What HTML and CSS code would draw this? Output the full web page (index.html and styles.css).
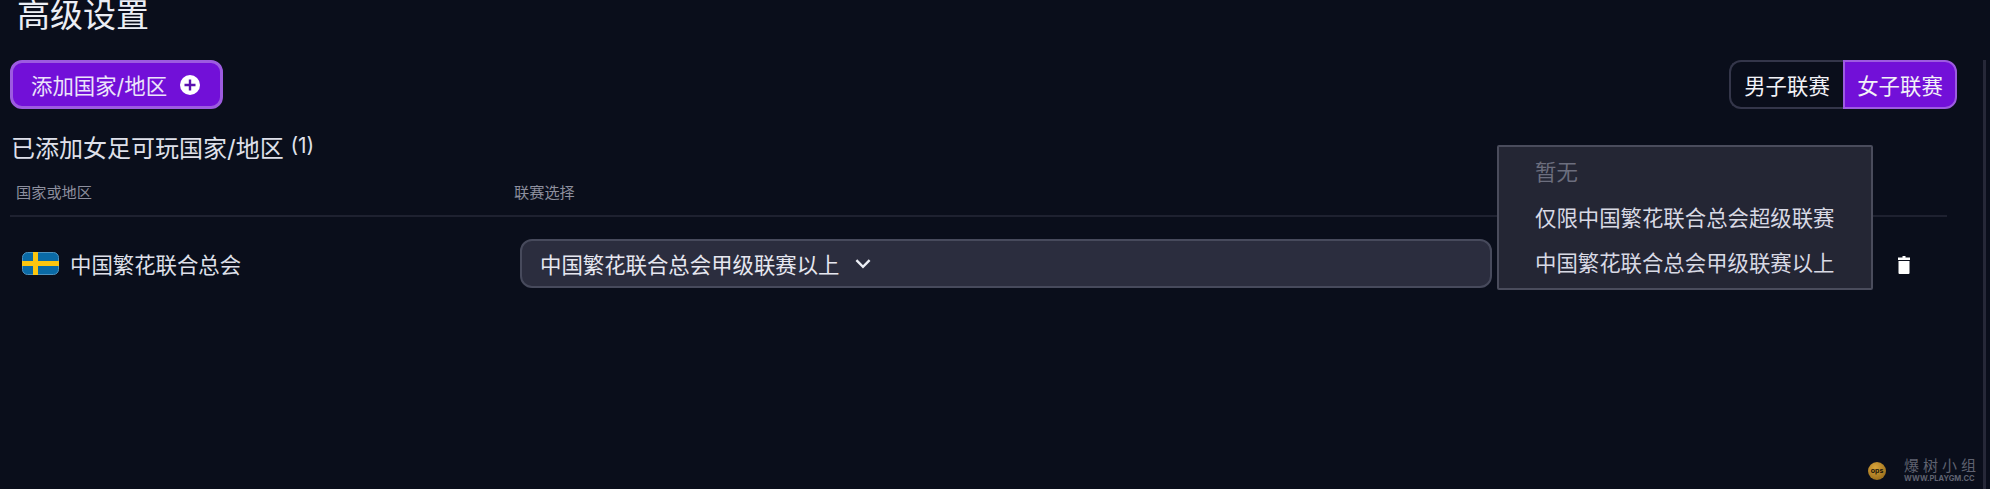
FILE: index.html
```html
<!DOCTYPE html>
<html lang="zh-CN">
<head>
    <meta charset="UTF-8">
    <title>高级设置</title>
    <link rel="stylesheet" href="styles.css">
</head>
<body>
    <div class="page">
        <h1 class="page-title">高级设置</h1>
        <div class="toolbar">
            <button type="button" class="btn-add">
                添加国家/地区
                <svg class="plus-icon" viewBox="0 0 20 20" width="20" height="20">
                    <circle cx="10" cy="10" r="10" fill="#fff"/>
                    <path d="M10 4.5v11M4.5 10h11" stroke="#5a0fb0" stroke-width="2.4"/>
                </svg>
            </button>
            <div class="toggle">
                <div class="toggle-item">男子联赛</div>
                <div class="toggle-item active">女子联赛</div>
            </div>
        </div>
        <h2 class="section-title">已添加女足可玩国家/地区 <sup class="count">(1)</sup></h2>
        <div class="table">
            <div class="table-head">
                <div class="head-cell">国家或地区</div>
                <div class="head-cell">联赛选择</div>
            </div>
            <div class="table-row">
                <div class="country">
                    <svg class="flag" viewBox="0 0 37 23" width="37" height="23">
                        <rect x="0.5" y="0.5" width="36" height="22" rx="5" fill="#0a6aa6" stroke="#4f93bf"/>
                        <path d="M11 0h5v23h-5zM0 9h37v5H0z" fill="#fcc60f"/>
                    </svg>
                    <span>中国繁花联合总会</span>
                </div>
                <div class="select">
                    <span>中国繁花联合总会甲级联赛以上</span>
                    <svg class="chevron" viewBox="0 0 16 10" width="18" height="11">
                        <path d="M2 2l6 6 6-6" fill="none" stroke="#eceef5" stroke-width="2.2"/>
                    </svg>
                </div>
                <div class="row-action">
                    <svg class="trash" viewBox="0 0 12 18" width="12" height="18">
                        <path d="M4.5 0h3v1.500h4.500v2.500H0V1.500h4.500zM0.500 5h11v12a1 1 0 0 1-1 1h-9a1 1 0 0 1-1-1z" fill="#fff"/>
                    </svg>
                </div>
            </div>
        </div>
    </div>

    <ul class="dropdown">
        <li class="disabled">暂无</li>
        <li>仅限中国繁花联合总会超级联赛</li>
        <li>中国繁花联合总会甲级联赛以上</li>
    </ul>

    <div class="scrollbar"></div>

    <div class="watermark">
        <div class="ball">ops</div>
        <div class="mark-text">
            <div class="mark-name">爆树小组</div>
            <div class="mark-url">WWW.PLAYGM.CC</div>
        </div>
    </div>
</body>
</html>
```

FILE: styles.css
```css
html, body {
    margin: 0;
    height: 100%;
}
body {
    background-color: #0a0e1b;
    color: #e6e7f0;
    font-family: Inter, "Noto Sans CJK SC", sans-serif;
    font-size: 21.4px;
    position: relative;
    overflow: hidden;
}
.page {
    width: 1947px;
    padding-left: 10px;
    box-sizing: border-box;
}
.page-title {
    margin: 0 0 30px 7px;
    height: 30px;
    line-height: 30px;
    font-size: 33px;
    font-weight: 400;
    color: #eceef5;
}
.toolbar {
    display: flex;
    justify-content: space-between;
    width: 1947px;
    height: 49px;
}
.btn-add {
    display: flex;
    align-items: center;
    gap: 13px;
    height: 49px;
    width: 213px;
    padding: 0 0 0 18px;
    background-color: #7210d8;
    border: 3px solid #9d5be0;
    border-radius: 12px;
    color: #ece4fa;
    font: inherit;
    box-sizing: border-box;
}
.toggle {
    display: flex;
    height: 49px;
}
.toggle-item {
    width: 114px;
    display: flex;
    align-items: center;
    justify-content: center;
    box-sizing: border-box;
    border: 2px solid #34364a;
    border-right: none;
    border-radius: 12px 0 0 12px;
    color: #f2f2f7;
}
.toggle-item.active {
    background-color: #7210d8;
    border: 2px solid #9d5be0;
    border-radius: 0 12px 12px 0;
}
.section-title {
    margin: 25px 0 0 1px;
    height: 30px;
    line-height: 30px;
    font-size: 24px;
    font-weight: 400;
    color: #dfe0ea;
}
.count {
    font-size: 21px;
    line-height: 0;
    vertical-align: 4px;
}
.table {
    margin-top: 12px;
}
.table-head {
    display: grid;
    grid-template-columns: 498px 1fr;
    height: 39px;
    border-bottom: 2px solid #1e2130;
    line-height: 33px;
}
.head-cell {
    padding-left: 6px;
    font-size: 15.2px;
    color: #8d8f9e;
}
.table-row {
    display: grid;
    grid-template-columns: 510px 972px 1fr;
    align-items: center;
    margin-top: 22px;
    height: 49px;
}
.country {
    display: flex;
    align-items: center;
    gap: 11px;
    padding-left: 12px;
    color: #dfe0ea;
}
.select {
    display: flex;
    align-items: center;
    gap: 15px;
    height: 49px;
    padding-left: 18px;
    background-color: #2b2d3e;
    border: 2px solid #474a5c;
    border-radius: 12px;
    box-sizing: border-box;
}
.row-action {
    display: flex;
    justify-content: flex-end;
    padding: 3px 37px 0 0;
}
.dropdown {
    position: absolute;
    left: 1497px;
    top: 145px;
    width: 376px;
    height: 145px;
    margin: 0;
    padding: 3px 0 0 36px;
    list-style: none;
    box-sizing: border-box;
    background-color: #242634;
    border: 2px solid #4a4c5c;
    border-radius: 2px;
    color: #d8d9e4;
}
.dropdown li {
    height: 45.500px;
    line-height: 45.500px;
}
.dropdown .disabled {
    color: #6c6e7e;
}
.scrollbar {
    position: absolute;
    left: 1983px;
    top: 60px;
    bottom: 0;
    width: 3px;
    background-color: #262838;
}
.watermark {
    position: absolute;
    left: 1868px;
    top: 458px;
    display: flex;
    gap: 18px;
    align-items: center;
}
.ball {
    width: 18px;
    height: 18px;
    border-radius: 50%;
    background: radial-gradient(circle at 40% 30%, #d9a43a, #8a5f14);
    color: #1a1408;
    font-size: 7px;
    font-weight: 700;
    line-height: 18px;
    text-align: center;
}
.mark-text {
    color: #5f6270;
}
.mark-name {
    font-size: 15px;
    line-height: 16px;
    letter-spacing: 4px;
}
.mark-url {
    font-size: 7.500px;
    line-height: 10px;
    font-weight: 700;
}
```
